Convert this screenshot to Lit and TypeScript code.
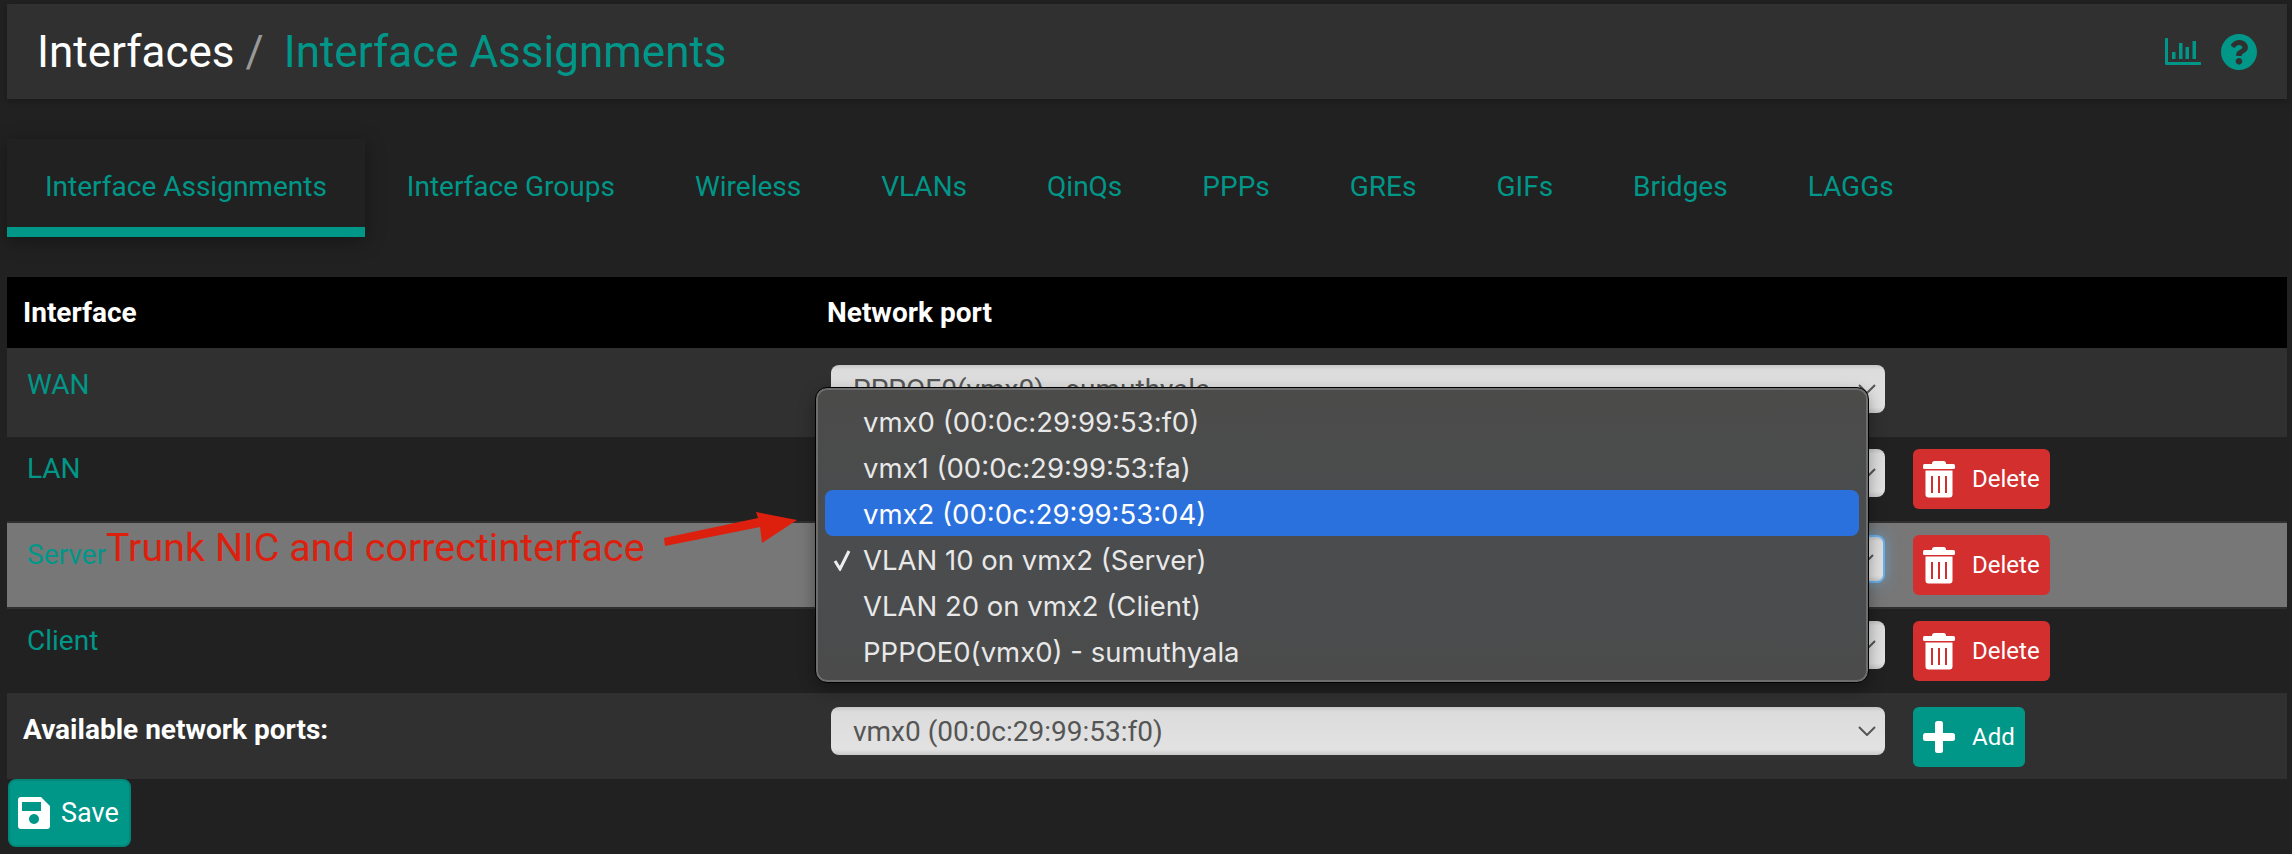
import { LitElement, html, css, svg } from "lit";
import { customElement } from "lit/decorators.js";

const trash = html`<svg class="ico" width="32" height="37" viewBox="0 0 32 37"><rect x="9" y="0" width="14" height="6" rx="2.5" fill="#fff"/><rect x="0" y="3" width="32" height="5" rx="1.5" fill="#fff"/><path fill="#fff" fill-rule="evenodd" d="M2.500 9.500H29.500V33.500a3 3 0 0 1-3 3H5.500a3 3 0 0 1-3-3ZM8 15V32H10V15ZM15 15V32H17V15ZM22 15V32H24V15Z"/></svg>`;
const plus = html`<svg class="ico" width="32" height="32" viewBox="0 0 32 32"><rect x="12" y="0" width="8" height="32" rx="2.500" fill="#fff"/><rect x="0" y="12" width="32" height="8" rx="2.500" fill="#fff"/></svg>`;
const save = html`<svg width="32" height="32" viewBox="0 0 32 32"><path fill="#fff" fill-rule="evenodd" d="M3 0H23L32 9V29a3 3 0 0 1-3 3H3a3 3 0 0 1-3-3V3a3 3 0 0 1 3-3ZM4 5V14H23V5ZM16 17a5 5 0 1 0 .01 0Z"/></svg>`;
const chevron = svg`<svg class="chev" width="18" height="10" viewBox="0 0 18 10"><path d="M1 1L9 9L17 1" fill="none" stroke="#555" stroke-width="2"/></svg>`;

const TABS = ["Interface Assignments", "Interface Groups", "Wireless", "VLANs", "QinQs", "PPPs", "GREs", "GIFs", "Bridges", "LAGGs"];
const MENU = [
  "vmx0 (00:0c:29:99:53:f0)",
  "vmx1 (00:0c:29:99:53:fa)",
  "vmx2 (00:0c:29:99:53:04)",
  "VLAN 10 on vmx2 (Server)",
  "VLAN 20 on vmx2 (Client)",
  "PPPOE0(vmx0) - sumuthyala",
];

@customElement("app-root")
export class AppRoot extends LitElement {
  static styles = css`
    :host {
      display: block;
      position: relative;
      width: 2292px;
      height: 854px;
      overflow: hidden;
      background: #212121;
      font-family: Roboto, "Liberation Sans", sans-serif;
      color: #fff;
    }
    .page { padding: 4px 5px 0 7px; }
    .head {
      height: 95px;
      background: #303030;
      box-shadow: 0 2px 6px rgba(0,0,0,.25);
      display: flex;
      align-items: center;
      padding: 0 30px 0 30px;
    }
    .crumb { font-size: 44px; line-height: 1; white-space: nowrap; }
    .sep { color: #999; margin: 0 20px 0 11px; }
    .cur { color: #009688; }
    .tools { margin-left: auto; display: flex; align-items: center; gap: 20px; }
    .tabs { display: flex; gap: 4px; margin-top: 40px; height: 98px; }
    .tab {
      padding: 6px 38px 0;
      height: 82px;
      display: flex;
      align-items: center;
      font-size: 28px;
      color: #009688;
      border-bottom: 10px solid transparent;
      white-space: nowrap;
    }
    .tab.on { border-bottom-color: #009688; box-shadow: 0 4px 18px rgba(0,0,0,.35); }
    .table { margin-top: 40px; }
    .row { display: grid; grid-template-columns: 796px 1054px auto; column-gap: 28px; }
    .th { background: #000; height: 71px; align-items: center; font-weight: 700; font-size: 28px; }
    .th div:first-child { padding-left: 16px; }
    .th div:nth-child(2) { margin-left: -4px; }
    .cell { font-size: 28px; color: #009688; padding: 1px 0 0 20px; line-height: 38px; }
    .std { height: 84px; padding-top: 12px; box-sizing: border-box; background: #212121; }
    .wan { height: 89px; padding-top: 17px; box-sizing: border-box; background: #303030; }
    .server { height: 88px; background: #777; border-top: 2px solid #303030; border-bottom: 2px solid #303030; }
    .avail { height: 86px; padding-top: 14px; box-sizing: border-box; background: #303030; }
    .avail .cell { color: #fff; font-weight: 700; padding: 4px 0 0 16px; }
    .sel {
      height: 48px;
      box-sizing: border-box;
      border-radius: 8px;
      background: linear-gradient(#c6c6c6, #dcdcdc 10%, #e2e2e2 88%, #c9c9c9);
      color: #555;
      font-size: 28px;
      padding: 0 9px 0 22px;
      display: flex;
      align-items: center;
      justify-content: space-between;
    }
    .sel.focus { border: 2px solid #66afe9; box-shadow: 0 0 14px rgba(102,175,233,.6); }
    .btn {
      height: 60px;
      box-sizing: border-box;
      border-radius: 6px;
      display: inline-flex;
      align-items: center;
      padding: 0 10px;
      gap: 17px;
      font-size: 24px;
      color: #fff;
      justify-self: start;
    }
    .del { background: #d32f2f; width: 137px; }
    .add { background: #009688; width: 112px; }
    .save {
      width: 123px;
      height: 68px;
      margin-left: 1px;
      box-sizing: border-box;
      border: 2px solid #00897b;
      border-radius: 8px;
      background: #009688;
      display: flex;
      align-items: center;
      padding: 0 8px;
      gap: 11px;
      font-size: 27px;
      color: #fff;
    }
    .ico { flex: none; }
    .menu {
      position: absolute;
      left: 815px;
      top: 387px;
      width: 1054px;
      height: 296px;
      box-sizing: border-box;
      padding: 10px 9px 0;
      border-radius: 12px;
      background: linear-gradient(#4b4b4a, #4a4c4e 60%, #4b4b4b);
      border: 1px solid #000;
      box-shadow: inset 0 0 0 2px #6d6d6d, 0 6px 16px rgba(0,0,0,.35);
      font-family: Inter, "Liberation Sans", sans-serif;
      font-size: 27.500px;
      color: #e8e8e8;
    }
    .item { height: 46px; box-sizing: border-box; padding: 2px 0 0 38px; display: flex; align-items: center; border-radius: 8px; position: relative; white-space: nowrap; }
    .item.hi { background: #2b71de; color: #fff; }
    .check { position: absolute; left: 8px; top: 13px; }
    .note {
      position: absolute;
      left: 106px;
      top: 525px;
      font-size: 39.500px;
      line-height: 46px;
      color: #dd1f0e;
      white-space: nowrap;
    }
    .arrow { position: absolute; left: 660px; top: 508px; }
  `;

  private rowCells(label: string, focus = false) {
    return html`
      <div class="cell">${label}</div>
      <div class="sel ${focus ? "focus" : ""}"><span></span>${chevron}</div>
      <div class="btn del">${trash}<span>Delete</span></div>`;
  }

  render() {
    return html`
      <div class="page">
        <header class="head">
          <div class="crumb">Interfaces<span class="sep">/</span><span class="cur">Interface Assignments</span></div>
          <div class="tools">
            <svg width="36" height="27" viewBox="0 0 36 27"><path d="M1.500 1V25.500H35" fill="none" stroke="#009688" stroke-width="3" stroke-linecap="round" stroke-linejoin="round"/><g fill="#009688"><rect x="7" y="14" width="3.500" height="7"/><rect x="14" y="5" width="3.500" height="16"/><rect x="20.500" y="9" width="3.500" height="12"/><rect x="27.500" y="3" width="3.500" height="18"/></g></svg>
            <svg width="36" height="36" viewBox="8 8 496 496"><path fill="#009688" d="M504 256c0 136.997-111.043 248-248 248S8 392.997 8 256C8 119.083 119.043 8 256 8s248 111.083 248 248zM262.655 90c-54.497 0-89.255 22.957-116.549 63.758-3.536 5.286-2.353 12.415 2.715 16.258l34.699 26.31c5.205 3.947 12.621 3.008 16.665-2.122 17.864-22.658 30.113-35.797 57.303-35.797 20.429 0 45.698 13.148 45.698 32.958 0 14.976-12.363 22.667-32.534 33.976C247.128 238.528 216 254.941 216 296v4c0 6.627 5.373 12 12 12h56c6.627 0 12-5.373 12-12v-1.333c0-28.462 83.186-29.647 83.186-106.667 0-58.002-60.165-102-116.531-102zM256 338c-25.365 0-46 20.635-46 46 0 25.364 20.635 46 46 46s46-20.636 46-46c0-25.365-20.635-46-46-46z"/></svg>
          </div>
        </header>
        <nav class="tabs">
          ${TABS.map((t, i) => html`<div class="tab ${i === 0 ? "on" : ""}">${t}</div>`)}
        </nav>
        <section class="table">
          <div class="row th"><div>Interface</div><div>Network port</div><div></div></div>
          <div class="row wan">
            <div class="cell">WAN</div>
            <div class="sel"><span>PPPOE0(vmx0) - sumuthyala</span>${chevron}</div>
            <div></div>
          </div>
          <div class="row std">${this.rowCells("LAN")}</div>
          <div class="row std server">${this.rowCells("Server", true)}</div>
          <div class="row std">${this.rowCells("Client")}</div>
          <div class="row avail">
            <div class="cell">Available network ports:</div>
            <div class="sel"><span>${MENU[0]}</span>${chevron}</div>
            <div class="btn add">${plus}<span>Add</span></div>
          </div>
        </section>
        <div class="save">${save}<span>Save</span></div>
      </div>
      <div class="note">Trunk NIC and correctinterface</div>
      <svg class="arrow" width="140" height="40" viewBox="660 508 140 40"><path fill="#dd1f0e" d="M664 538L758 518L756 512L797 520L762 543L760 527L665 546Z"/></svg>
      <div class="menu">
        ${MENU.map((m, i) => html`<div class="item ${i === 2 ? "hi" : ""}">
          ${i === 3 ? html`<svg class="check" width="20" height="22" viewBox="0 0 20 22"><path d="M2 12L7 20L16 2" fill="none" stroke="#eee" stroke-width="3"/></svg>` : ""}
          <span>${m}</span></div>`)}
      </div>`;
  }
}
